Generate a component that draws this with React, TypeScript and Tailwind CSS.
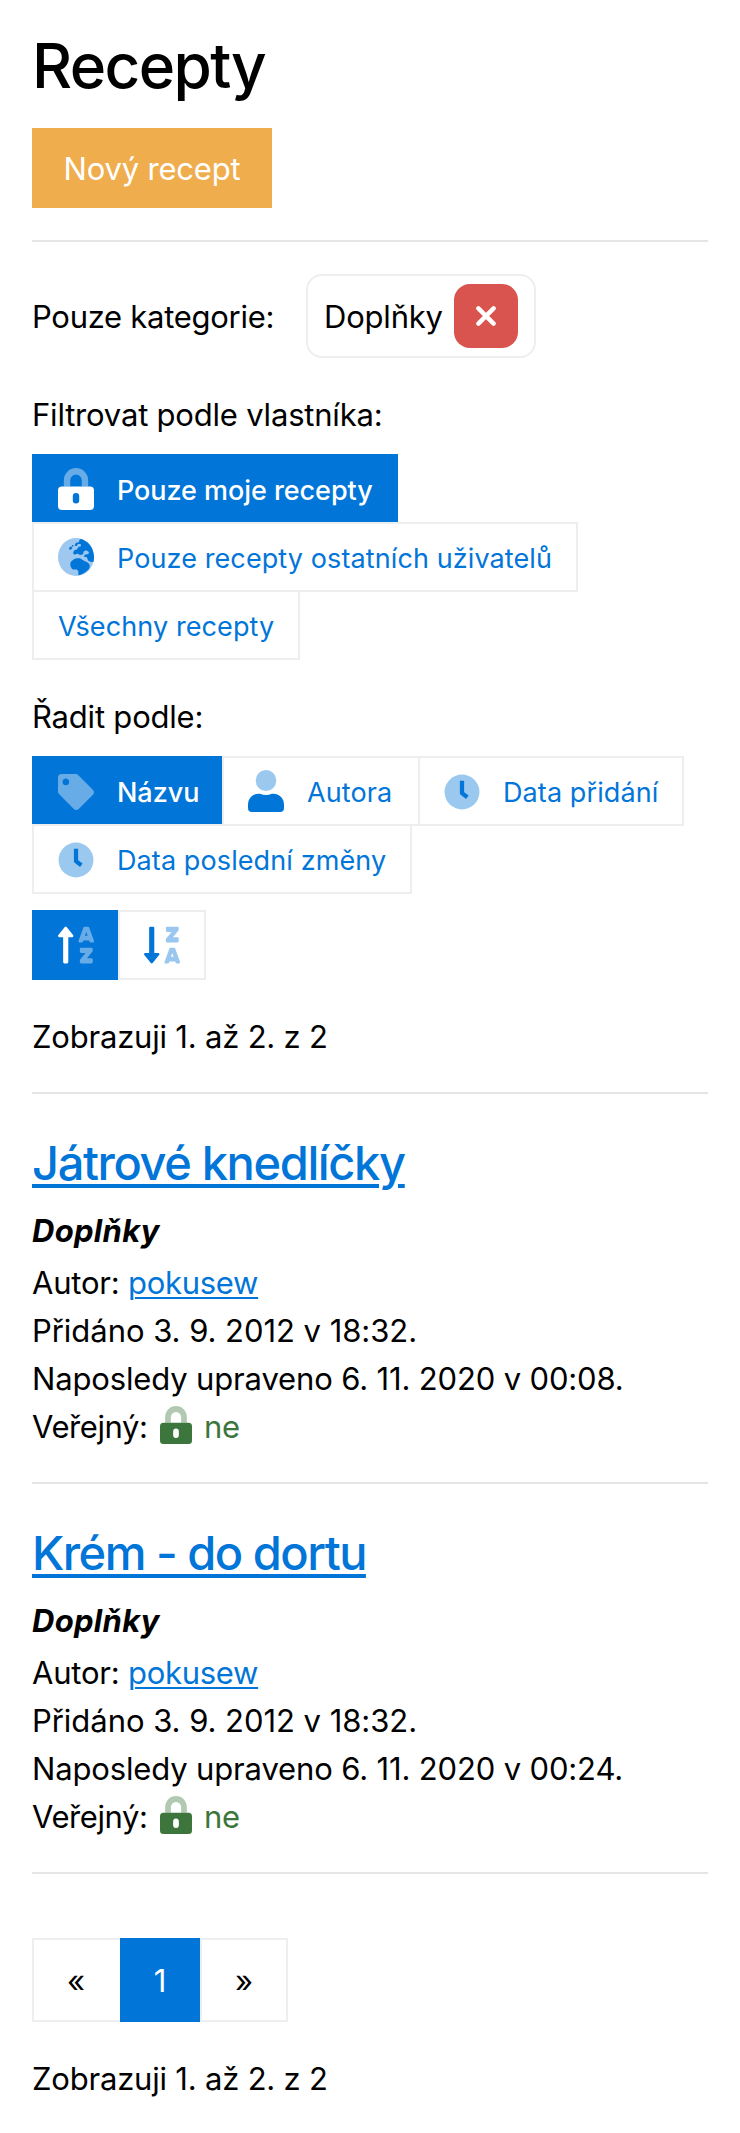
import React from "react";
import { FaSortAlphaUp, FaSortAlphaDownAlt } from "react-icons/fa";

function LockIcon({ className }: { className: string }) {
  return (
    <svg viewBox="0 0 448 512" preserveAspectRatio="none" fill="currentColor" className={className}>
      <path
        opacity="0.4"
        d="M224 0A152 152 0 0 0 72 152v72h80v-72a72 72 0 0 1 144 0v72h80v-72A152 152 0 0 0 224 0z"
      />
      <path d="M400 224H48a48 48 0 0 0-48 48v192a48 48 0 0 0 48 48h352a48 48 0 0 0 48-48V272a48 48 0 0 0-48-48zM264 392a40 40 0 0 1-80 0v-48a40 40 0 0 1 80 0z" />
    </svg>
  );
}

function GlobeIcon() {
  return (
    <svg viewBox="0 0 108 112" preserveAspectRatio="none" fill="#0275d8" className="h-[38px] w-9 shrink-0">
      <ellipse cx="54" cy="56" rx="54" ry="56" fill="#9ec8ef" />
      <path d="M68 3C84 7 96 18 102 30C106 40 108 49 108 57L107 70L99 71L90 66L87 57L78 55L80 49L91 47L93 41L84 36L77 40L75 48L66 50L58 46L50 49L45 45L48 37L57 33L62 26L69 24L68 18L60 18L56 24L50 22L53 15L64 12L63 7Z" />
      <path d="M43 66C49 60 57 59 65 60C72 63 76 67 83 69C89 71 94 76 95 80C96 85 94 90 90 94C82 102 73 107 61 110L61 97L56 93L45 93C39 88 37 83 37 77C37 72 39 69 43 66Z" />
      <ellipse cx="38" cy="30" rx="5" ry="4" transform="rotate(-35 38 30)" />
      <circle cx="44" cy="23" r="2.5" />
    </svg>
  );
}

function TagIcon() {
  return (
    <svg viewBox="0 0 512 512" fill="currentColor" className="mt-0.5 h-9 w-9 shrink-0">
      <path
        opacity="0.4"
        d="M0 252.118V48C0 21.49 21.49 0 48 0h204.118a48 48 0 0 1 33.941 14.059l211.882 211.882c18.745 18.745 18.745 49.137 0 67.882L293.823 497.941c-18.745 18.745-49.137 18.745-67.882 0L14.059 286.059A48 48 0 0 1 0 252.118zM112 64c-26.51 0-48 21.49-48 48s21.49 48 48 48 48-21.49 48-48-21.49-48-48-48z"
      />
    </svg>
  );
}

function UserIcon() {
  return (
    <svg viewBox="0 0 448 512" preserveAspectRatio="none" fill="currentColor" className="h-[42px] w-9 shrink-0">
      <circle cx="224" cy="128" r="128" opacity="0.4" />
      <path d="M313.6 288h-16.7a174.1 174.1 0 0 1-145.8 0h-16.7A134.4 134.4 0 0 0 0 422.4V464a48 48 0 0 0 48 48h352a48 48 0 0 0 48-48v-41.6A134.4 134.4 0 0 0 313.6 288z" />
    </svg>
  );
}

function ClockIcon() {
  return (
    <svg viewBox="0 0 512 512" fill="none" className="mt-0.5 h-9 w-9 shrink-0">
      <circle cx="256" cy="256" r="248" fill="currentColor" opacity="0.4" />
      <path d="M256 96V272L332 330" stroke="currentColor" strokeWidth="60" strokeLinejoin="round" />
    </svg>
  );
}

function SortIcon({ descending = false }: { descending?: boolean }) {
  const Icon = descending ? FaSortAlphaDownAlt : FaSortAlphaUp;
  return (
    <span className="grid h-[42px] w-9 shrink-0">
      <Icon preserveAspectRatio="none" className="col-start-1 row-start-1 h-[42px] w-9 [clip-path:inset(0_50%_0_0)]" />
      <Icon
        preserveAspectRatio="none"
        className="col-start-1 row-start-1 h-[42px] w-9 opacity-40 [clip-path:inset(0_0_0_50%)]"
      />
    </span>
  );
}

type OptionProps = {
  active?: boolean;
  icon?: React.ReactNode;
  label?: string;
  className: string;
};

function Option({ active = false, icon, label, className }: OptionProps) {
  const tone = active
    ? "border-[#0275d8] bg-[#0275d8] text-white"
    : "border-[#eceeef] bg-white text-[#0275d8]";
  const weight = active ? "font-medium tracking-[-0.06px]" : "tracking-[0.1px]";
  return (
    <button
      className={`flex h-[70px] shrink-0 items-center gap-[23px] whitespace-nowrap border-2 pl-6 text-[27px] ${tone} ${weight} ${className}`}
    >
      {icon}
      {label && <span className="pt-[3px]">{label}</span>}
    </button>
  );
}

function Divider() {
  return <div className="h-0.5 bg-[#e5e5e5]" />;
}

function Recipe({ title, titleClass, updated }: { title: string; titleClass: string; updated: string }) {
  return (
    <article className="pb-[31px] pt-10">
      <h2 className="h-[58px] text-[47px] font-medium leading-[58px]">
        <a
          href="#"
          className={`text-[#0275d8] underline decoration-[4px] underline-offset-[4px] ${titleClass}`}
        >
          {title}
        </a>
      </h2>
      <p className="mt-[15px] font-bold italic tracking-[0.3px]">Doplňky</p>
      <p className="mt-1">
        Autor:{" "}
        <a href="#" className="tracking-[-0.3px] text-[#0275d8] underline decoration-2 underline-offset-[3px]">
          pokusew
        </a>
      </p>
      <p className="tracking-[-0.04px]">Přidáno 3. 9. 2012 v 18:32.</p>
      <p className="tracking-[-0.15px]">{updated}</p>
      <p className="flex">
        <span className="w-32 tracking-[-0.4px]">Veřejný:</span>
        <LockIcon className="mt-[3px] h-[38px] w-8 text-[#3c763d]" />
        <span className="ml-3 text-[#3c763d]">ne</span>
      </p>
    </article>
  );
}

export default function App() {
  return (
    <main className="min-h-[2133px] bg-white px-8 pt-[26px] font-['Inter',sans-serif] text-[31px] leading-[48px] tracking-[-0.2px] text-black">
      <h1 className="h-20 text-[62px] font-medium leading-[80px] tracking-[-1.6px]">Recepty</h1>
      <button className="mt-[22px] flex h-20 w-60 items-center justify-center bg-[#f0ad4e] pt-0.5 text-white">
        Nový recept
      </button>
      <div className="mt-8">
        <Divider />
      </div>

      <div className="mt-8 flex items-center">
        <span className="w-[274px] pt-0.5 tracking-[-0.28px]">Pouze kategorie:</span>
        <div className="flex h-[84px] w-[230px] items-center rounded-2xl border-2 border-[#eceeef] pl-4">
          <span className="w-[130px] pt-0.5">Doplňky</span>
          <button className="flex size-16 items-center justify-center rounded-2xl bg-[#d9534f]">
            <svg viewBox="0 0 20 20" fill="none" className="size-5">
              <path d="M2.4 2.4 17.6 17.6M17.6 2.4 2.4 17.6" stroke="white" strokeWidth="4.4" strokeLinecap="round" />
            </svg>
          </button>
        </div>
      </div>

      <section className="mt-[33px]">
        <p>Filtrovat podle vlastníka:</p>
        <div className="mt-[15px] flex flex-col items-start">
          <Option active icon={<LockIcon className="h-[42px] w-9 shrink-0" />} label="Pouze moje recepty" className="w-[366px]" />
          <Option icon={<GlobeIcon />} label="Pouze recepty ostatních uživatelů" className="-mt-0.5 w-[546px]" />
          <Option label="Všechny recepty" className="-mt-0.5 w-[268px]" />
        </div>
      </section>

      <section className="mt-[33px]">
        <p>Řadit podle:</p>
        <div className="mt-[15px] flex">
          <Option active icon={<TagIcon />} label="Názvu" className="w-48" />
          <Option icon={<UserIcon />} label="Autora" className="-ml-0.5 w-[198px]" />
          <Option icon={<ClockIcon />} label="Data přidání" className="-ml-0.5 w-[266px]" />
        </div>
        <div className="-mt-0.5 flex">
          <Option icon={<ClockIcon />} label="Data poslední změny" className="w-[380px]" />
        </div>
        <div className="mt-4 flex">
          <Option active icon={<SortIcon />} className="w-[88px]" />
          <Option icon={<SortIcon descending />} className="-ml-0.5 w-[88px]" />
        </div>
      </section>

      <p className="mb-[31px] mt-[33px]">Zobrazuji 1. až 2. z 2</p>
      <Divider />
      <Recipe
        title="Játrové knedlíčky"
        titleClass="tracking-[-1.38px]"
        updated="Naposledy upraveno 6. 11. 2020 v 00:08."
      />
      <Divider />
      <Recipe
        title="Krém - do dortu"
        titleClass="tracking-[-1.5px]"
        updated="Naposledy upraveno 6. 11. 2020 v 00:24."
      />
      <Divider />

      <nav className="mt-16 flex">
        <button className="h-[84px] w-[90px] border-2 border-[#eceeef] pr-0.5 pt-0.5">«</button>
        <button className="-ml-0.5 h-[84px] w-[82px] border-2 border-[#0275d8] bg-[#0275d8] pr-0.5 pt-0.5 text-white">1</button>
        <button className="-ml-0.5 h-[84px] w-[88px] border-2 border-[#eceeef] bg-white pt-0.5">»</button>
      </nav>
      <p className="mt-[33px]">Zobrazuji 1. až 2. z 2</p>
    </main>
  );
}
